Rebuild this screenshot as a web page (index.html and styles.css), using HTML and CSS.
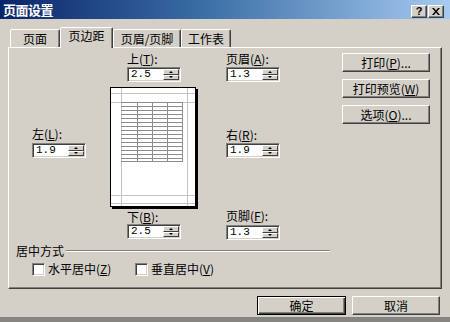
FILE: index.html
```html
<!DOCTYPE html>
<html lang="zh-CN">
<head>
<meta charset="utf-8">
<title>页面设置</title>
<link rel="stylesheet" href="styles.css">
</head>
<body>
<div class="dialog">
  <div class="titlebar">
    <span class="title">页面设置</span>
    <div class="caption-btns">
      <span class="cbtn help">?</span>
      <span class="cbtn close"><svg width="8" height="7" viewBox="0 0 8 7"><path d="M0 0h2l2 2.5L6 0h2L5 3.5 8 7H6L4 4.5 2 7H0l3-3.5z" fill="#000"/></svg></span>
    </div>
  </div>

  <div class="tabs">
    <div class="tab t1">页面</div>
    <div class="tab t2 active">页边距</div>
    <div class="tab t3">页眉/页脚</div>
    <div class="tab t4">工作表</div>
  </div>

  <div class="panel">
    <div class="field a-top">
      <span class="lbl">上(<u>T</u>):</span>
      <div class="spin"><span class="val">2.5</span><span class="arrows"><span class="ab up"></span><span class="ab dn"></span></span></div>
    </div>
    <div class="field a-head">
      <span class="lbl">页眉(<u>A</u>):</span>
      <div class="spin"><span class="val">1.3</span><span class="arrows"><span class="ab up"></span><span class="ab dn"></span></span></div>
    </div>
    <div class="btncol">
      <div class="btn">打印(<u>P</u>)...</div>
      <div class="btn">打印预览(<u>W</u>)</div>
      <div class="btn">选项(<u>O</u>)...</div>
    </div>

    <div class="field a-left">
      <span class="lbl">左(<u>L</u>):</span>
      <div class="spin"><span class="val">1.9</span><span class="arrows"><span class="ab up"></span><span class="ab dn"></span></span></div>
    </div>
    <div class="preview">
      <svg width="88" height="122" viewBox="0 0 88 122">
        <rect x="2" y="2" width="86" height="120" fill="#000"/>
        <rect x="0.5" y="0.5" width="85" height="119" fill="#fff" stroke="#000"/>
        <g stroke="#c4c4c4" stroke-width="1">
          <line x1="11.5" y1="1" x2="11.5" y2="119"/>
          <line x1="77.5" y1="1" x2="77.5" y2="119"/>
          <line x1="1" y1="6.5" x2="85" y2="6.5"/>
          <line x1="1" y1="15.5" x2="85" y2="15.5"/>
          <line x1="1" y1="108.5" x2="85" y2="108.5"/>
          <line x1="1" y1="116.5" x2="85" y2="116.5"/>
        </g>
        <g stroke="#8c8c8c" stroke-width="1">
          <line x1="11" y1="15.5" x2="72" y2="15.5"/>
          <line x1="11" y1="19.5" x2="72" y2="19.5"/>
          <line x1="11" y1="23.5" x2="72" y2="23.5"/>
          <line x1="11" y1="27.5" x2="72" y2="27.5"/>
          <line x1="11" y1="31.5" x2="72" y2="31.5"/>
          <line x1="11" y1="35.5" x2="72" y2="35.5"/>
          <line x1="11" y1="39.5" x2="72" y2="39.5"/>
          <line x1="11" y1="43.5" x2="72" y2="43.5"/>
          <line x1="11" y1="47.5" x2="72" y2="47.5"/>
          <line x1="11" y1="51.5" x2="72" y2="51.5"/>
          <line x1="11" y1="55.5" x2="72" y2="55.5"/>
          <line x1="11" y1="59.5" x2="72" y2="59.5"/>
          <line x1="11" y1="63.5" x2="72" y2="63.5"/>
          <line x1="11" y1="67.5" x2="72" y2="67.5"/>
          <line x1="11" y1="71.5" x2="72" y2="71.5"/>
          <line x1="11" y1="74.5" x2="72" y2="74.5"/>
          <line x1="27.5" y1="15" x2="27.5" y2="75"/>
          <line x1="42.5" y1="15" x2="42.5" y2="75"/>
          <line x1="57.5" y1="15" x2="57.5" y2="75"/>
          <line x1="72.5" y1="15" x2="72.5" y2="75"/>
        </g>
      </svg>
    </div>
    <div class="field a-right">
      <span class="lbl">右(<u>R</u>):</span>
      <div class="spin"><span class="val">1.9</span><span class="arrows"><span class="ab up"></span><span class="ab dn"></span></span></div>
    </div>

    <div class="field a-bot">
      <span class="lbl">下(<u>B</u>):</span>
      <div class="spin"><span class="val">2.5</span><span class="arrows"><span class="ab up"></span><span class="ab dn"></span></span></div>
    </div>
    <div class="field a-foot">
      <span class="lbl">页脚(<u>F</u>):</span>
      <div class="spin"><span class="val">1.3</span><span class="arrows"><span class="ab up"></span><span class="ab dn"></span></span></div>
    </div>

    <div class="group">
      <div class="legend"><span class="legend-text">居中方式</span><span class="etch"></span></div>
      <div class="checks">
        <label class="chk c1"><span class="box"></span><span>水平居中(<u>Z</u>)</span></label>
        <label class="chk c2"><span class="box"></span><span>垂直居中(<u>V</u>)</span></label>
      </div>
    </div>
  </div>

  <div class="footer">
    <div class="btn default">确定</div>
    <div class="btn">取消</div>
  </div>
</div>
</body>
</html>
```
FILE: styles.css
```css
html, body {
  margin: 0;
  padding: 0;
  background: #d4d0c8;
}

body {
  font-family: "Noto Sans CJK SC", "Noto Sans", sans-serif;
  font-size: 12px;
  line-height: 14px;
  color: #000;
}

.dialog {
  width: 450px;
  height: 322px;
  box-sizing: border-box;
  background: #d4d0c8;
  border-bottom: 5px solid #868481;
  display: flex;
  flex-direction: column;
  overflow: hidden;
}

/* title bar */
.titlebar {
  height: 19px;
  flex: none;
  display: flex;
  justify-content: space-between;
  background: linear-gradient(to right, #0a246a 0%, #3a6ea5 45%, #a6caf0 100%);
}

.title {
  color: #fff;
  font-weight: bold;
  font-size: 13px;
  line-height: 19px;
  padding-left: 3px;
  letter-spacing: -0.5px;
}

.caption-btns {
  display: flex;
  gap: 1px;
  padding: 5px 6px 0 0;
}

.cbtn {
  width: 16px;
  height: 13px;
  box-sizing: border-box;
  background: #d4d0c8;
  border: 1px solid;
  border-color: #fff #404040 #404040 #fff;
  box-shadow: inset -1px -1px 0 #808080;
  display: flex;
  align-items: center;
  justify-content: center;
}

.help {
  font-family: "Liberation Sans", sans-serif;
  font-weight: bold;
  font-size: 11px;
  line-height: 11px;
}

/* tabs */
.tabs {
  flex: none;
  display: flex;
  align-items: flex-end;
  margin-top: 8px;
  padding-left: 10px;
  height: 20px;
}

.tab {
  position: relative;
  height: 18px;
  box-sizing: border-box;
  border: 1px solid;
  border-bottom: none;
  border-color: #fff #404040 transparent #fff;
  box-shadow: inset -1px 0 0 #808080;
  border-radius: 2px 2px 0 0;
  text-align: center;
  line-height: 16px;
  padding-top: 1px;
  background: #d4d0c8;
}

.t1 { width: 50px; border-right-color: #404040; }
.t2 { width: 53px; }
.t3 { width: 68px; }
.t4 { width: 50px; }

.tab.active {
  height: 21px;
  margin-bottom: -1px;
  z-index: 2;
  padding-top: 1px;
  line-height: 14px;
}

/* panel */
.panel {
  flex: none;
  margin-left: 8px;
  width: 434px;
  height: 242px;
  box-sizing: border-box;
  border: 1px solid;
  border-color: #fff #404040 #404040 #fff;
  box-shadow: inset -1px -1px 0 #808080;
  padding-left: 7px;
  display: grid;
  grid-template-columns: 16px 78px 88px 28px 116px 88px;
  grid-template-rows: 39px 122px 33px auto;
  grid-template-areas:
    ". . top . head btns"
    ". left prev . right btns"
    ". . bot . foot btns"
    "grp grp grp grp grp grp";
}

.field {
  display: flex;
  flex-direction: column;
  align-items: flex-start;
}

.lbl {
  display: block;
  height: 14px;
  white-space: nowrap;
}

u { text-decoration: underline; text-underline-offset: 1px; }

.a-top { grid-area: top; justify-self: center; padding-top: 4px; }
.a-head { grid-area: head; padding-top: 4px; }
.a-top .spin, .a-head .spin { margin-top: 1px; }

.a-left { grid-area: left; padding-top: 40px; }
.a-right { grid-area: right; padding-top: 41px; }
.a-left .spin { margin-top: 2px; }
.a-right .spin { margin-top: 1px; }

.a-bot { grid-area: bot; justify-self: center; padding-top: 1px; }
.a-foot { grid-area: foot; padding-top: 0; }
.a-bot .spin { margin-top: 0; }
.a-foot .spin { margin-top: 2px; }

.preview {
  grid-area: prev;
  line-height: 0;
}

/* spinner */
.spin {
  width: 54px;
  height: 15px;
  box-sizing: border-box;
  display: flex;
  background: #fff;
  border: 1px solid;
  border-color: #808080 #fff #fff #808080;
  box-shadow: inset 1px 1px 0 #404040, inset -1px -1px 0 #d4d0c8;
}

.val {
  flex: 1;
  padding-left: 3px;
  font-family: "Liberation Mono", monospace;
  font-size: 11px;
  line-height: 13px;
}

.arrows {
  width: 16px;
  margin: 1px 1px 1px 0;
  display: flex;
  flex-direction: column;
}

.ab {
  flex: 1;
  background: #d4d0c8;
  box-sizing: border-box;
  border: 1px solid;
  border-color: #fff #404040 #404040 #fff;
  display: flex;
  align-items: center;
  justify-content: center;
}

.ab::after {
  content: "";
  width: 0;
  height: 0;
  border-left: 2px solid transparent;
  border-right: 2px solid transparent;
}

.up::after { border-bottom: 2px solid #000; }
.dn::after { border-top: 2px solid #000; }

/* buttons */
.btncol {
  grid-area: btns;
  align-self: start;
  margin-top: 5px;
  display: flex;
  flex-direction: column;
  gap: 7px;
}

.btn {
  width: 88px;
  height: 19px;
  box-sizing: border-box;
  background: #d4d0c8;
  border: 1px solid;
  border-color: #fff #404040 #404040 #fff;
  box-shadow: inset -1px -1px 0 #808080;
  text-align: center;
  line-height: 17px;
  white-space: nowrap;
}

.btn.default {
  width: 89px;
  border-color: #000;
  box-shadow: inset 1px 1px 0 #fff, inset -1px -1px 0 #404040, inset -2px -2px 0 #808080;
}

/* group */
.group {
  grid-area: grp;
  width: 314px;
  padding-top: 2px;
}

.legend {
  display: flex;
  align-items: center;
  height: 14px;
}

.legend-text {
  padding-right: 2px;
}

.etch {
  flex: 1;
  height: 0;
  border-top: 1px solid #808080;
  border-bottom: 1px solid #fff;
}

.checks {
  display: flex;
  margin-top: 4px;
  padding-left: 16px;
  height: 14px;
}

.chk {
  display: flex;
  align-items: center;
  gap: 3px;
}

.c1 { width: 103px; }

.box {
  width: 13px;
  height: 13px;
  box-sizing: border-box;
  background: #fff;
  border: 1px solid;
  border-color: #808080 #fff #fff #808080;
  box-shadow: inset 1px 1px 0 #404040, inset -1px -1px 0 #d4d0c8;
}

/* footer */
.footer {
  flex: none;
  display: flex;
  justify-content: flex-end;
  gap: 6px;
  margin-top: 7px;
  padding-right: 10px;
}
```
